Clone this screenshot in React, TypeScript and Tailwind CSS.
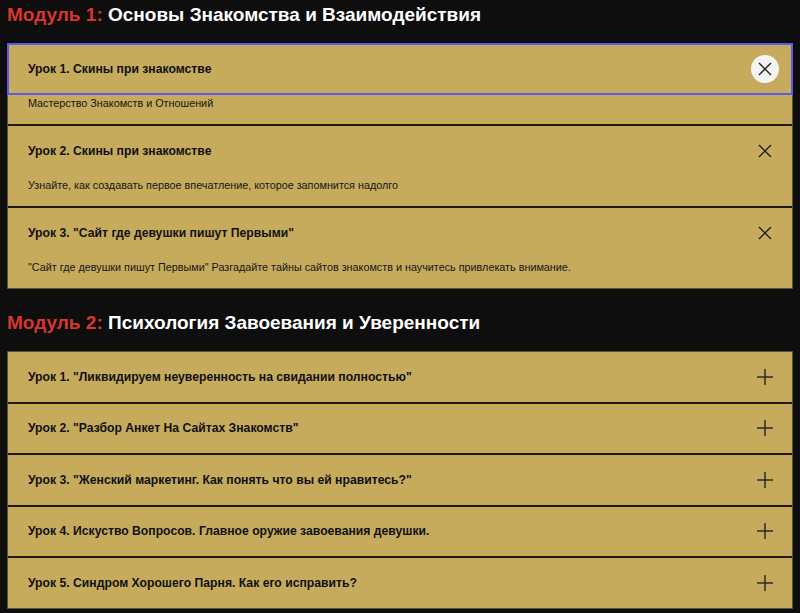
import React from 'react';

interface Lesson {
  title: string;
  text?: string;
}

const module1: Lesson[] = [
  { title: 'Урок 1. Скины при знакомстве', text: 'Мастерство Знакомств и Отношений' },
  { title: 'Урок 2. Скины при знакомстве', text: 'Узнайте, как создавать первое впечатление, которое запомнится надолго' },
  {
    title: 'Урок 3. "Сайт где девушки пишут Первыми"',
    text: '"Сайт где девушки пишут Первыми" Разгадайте тайны сайтов знакомств и научитесь привлекать внимание.',
  },
];

const module2: Lesson[] = [
  { title: 'Урок 1. "Ликвидируем неуверенность на свидании полностью"' },
  { title: 'Урок 2. "Разбор Анкет На Сайтах Знакомств"' },
  { title: 'Урок 3. "Женский маркетинг. Как понять что вы ей нравитесь?"' },
  { title: 'Урок 4. Искуство Вопросов. Главное оружие завоевания девушки.' },
  { title: 'Урок 5. Синдром Хорошего Парня. Как его исправить?' },
];

function CloseIcon() {
  return (
    <svg width="16" height="16" viewBox="0 0 16 16" fill="none" stroke="#222" strokeWidth="1.4">
      <line x1="2" y1="2" x2="14" y2="14" />
      <line x1="14" y1="2" x2="2" y2="14" />
    </svg>
  );
}

function PlusIcon() {
  return (
    <svg width="18" height="18" viewBox="0 0 18 18" fill="none" stroke="#222" strokeWidth="1.4">
      <line x1="9" y1="1" x2="9" y2="17" />
      <line x1="1" y1="9" x2="17" y2="9" />
    </svg>
  );
}

function Item({ lesson, focused, last }: { lesson: Lesson; focused?: boolean; last?: boolean }) {
  const open = !!lesson.text;
  return (
    <div className={last ? '' : 'border-b-2 border-[#1c1a12]'}>
      <div
        className={`flex h-[49.5px] items-center justify-between pl-5 pr-[13px] ${
          focused ? 'outline-2 outline-[#5b5bf0] -outline-offset-1' : ''
        }`}
      >
        <span className="text-[12.2px] font-bold text-[#111]">{lesson.title}</span>
        <span
          className={`flex h-7 w-7 items-center justify-center rounded-full ${focused ? 'bg-[#f4f4f4]' : ''}`}
        >
          {open ? <CloseIcon /> : <PlusIcon />}
        </span>
      </div>
      {open && (
        <div className="px-5 pt-[1px] pb-[13.5px] text-[10.8px] leading-4 text-[#161616]">{lesson.text}</div>
      )}
    </div>
  );
}

function Module({ num, title, lessons, first }: { num: number; title: string; lessons: Lesson[]; first?: boolean }) {
  return (
    <section>
      <h2 className={`text-[19px] leading-6 font-bold ${first ? 'pt-[3px]' : 'pt-[22px]'} pb-4`}>
        <span className="text-[#d7372c]">Модуль {num}:</span> <span className="text-white">{title}</span>
      </h2>
      <div className="border border-[#5c5132] bg-[#c6ab5d]">
        {lessons.map((l, i) => (
          <Item key={i} lesson={l} focused={first && i === 0} last={i === lessons.length - 1} />
        ))}
      </div>
    </section>
  );
}

export default function App() {
  return (
    <div className="min-h-[613px] bg-[#0e0e0e] px-[7px] font-['Liberation_Sans',Arial,sans-serif]">
      <Module num={1} title="Основы Знакомства и Взаимодействия" lessons={module1} first />
      <Module num={2} title="Психология Завоевания и Уверенности" lessons={module2} />
    </div>
  );
}
